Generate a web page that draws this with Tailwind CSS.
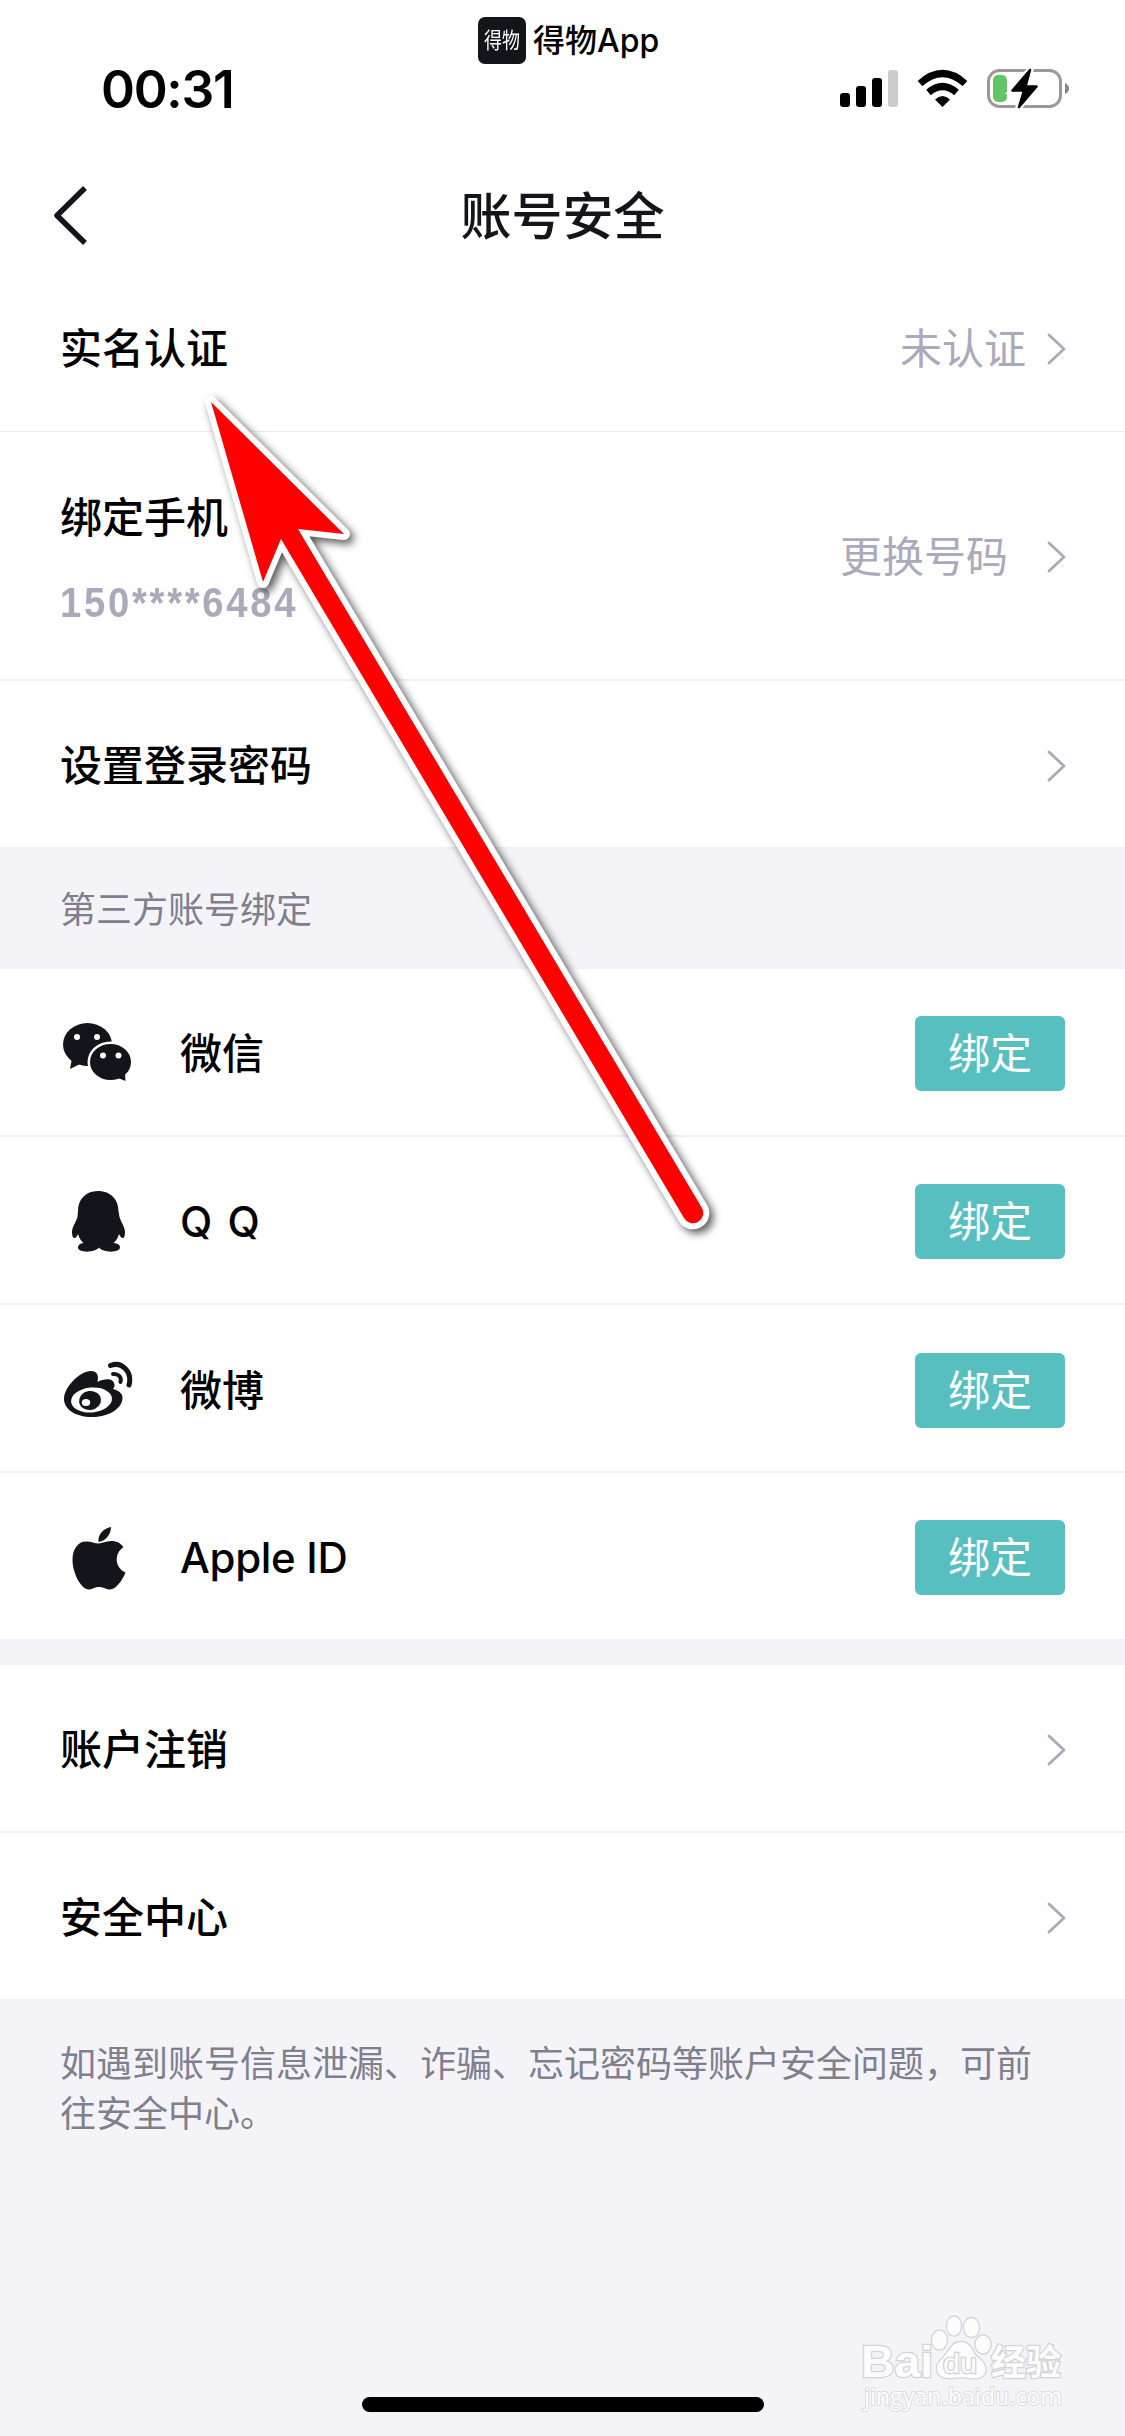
<!DOCTYPE html>
<html lang="zh-CN">
<head>
<meta charset="utf-8">
<title>账号安全</title>
<script src="https://cdn.jsdelivr.net/npm/@tailwindcss/browser@4"></script>
</head>
<body class="relative flex h-[2436px] w-[1125px] flex-col overflow-hidden bg-[#f4f3f8] font-['Inter','Noto_Sans_CJK_SC',sans-serif] text-black">
<svg width="0" height="0" class="absolute">
  <defs>
    <symbol id="chev" viewBox="0 0 20 32"><path d="M2 2 17 16 2 30" fill="none" stroke="#aaaabb" stroke-width="2.8" stroke-linejoin="round" stroke-linecap="round"/></symbol>
  </defs>
</svg>

<header class="h-[264px] bg-white">
  <div class="flex h-[128px] pr-[55px] pl-[101px]">
    <div class="w-[377px] pt-[61px] text-[51.5px] leading-[56px] font-semibold tracking-[-1.3px]">00:31</div>
    <div class="mt-[17px] flex h-[47px] flex-1 items-center gap-[7px]">
      <div class="flex h-[47px] w-[48px] items-center justify-center rounded-[7px] bg-[#14151a] text-[18px] text-white"><span class="scale-y-[1.22]">得物</span></div>
      <div class="text-[32px] font-medium whitespace-nowrap">得物App</div>
    </div>
    <svg class="mt-[66px] h-[46px] w-[230px]" viewBox="0 0 230 46">
      <rect x="0" y="27" width="10" height="14" rx="3"/>
      <rect x="16" y="20" width="10" height="21" rx="3"/>
      <rect x="32" y="12" width="10" height="29" rx="3"/>
      <rect x="48" y="4" width="10" height="37" rx="3" fill="#ccc"/>
      <path d="M102.500 41 95 33.500Q102.500 26.500 110 33.500Z"/>
      <path d="M88.500 26.500Q102.500 14.500 116.500 26.500" fill="none" stroke="#000" stroke-width="7"/>
      <path d="M80 17.500Q102.500-2.500 125 17.500" fill="none" stroke="#000" stroke-width="7"/>
      <rect x="148.500" y="4.500" width="72" height="36" rx="11" fill="none" stroke="#999" stroke-width="3"/>
      <path d="M225 17q4 2 4 5.500t-4 5.500z" fill="#888"/>
      <rect x="153" y="9" width="14" height="27" rx="5" fill="#65c466"/>
      <path d="M191 2.500 171.500 25H182.500L178 42.500 197.500 20H186.500Z" fill="#000" stroke="#fff" stroke-width="6"/>
      <path d="M190 4 172.500 24.500H184L179 41 196.500 20.500H185.500Z" stroke="#000" stroke-width="2.500" stroke-linejoin="round"/>
    </svg>
  </div>
  <div class="grid h-[136px] grid-cols-[200px_1fr_200px] pt-[52px]">
    <svg class="ml-[50px] h-[70px] w-[40px]" viewBox="0 0 40 70"><path d="M35 8 7 35.500 35 63" fill="none" stroke="#14151a" stroke-width="5.500" stroke-linejoin="round"/></svg>
    <h1 class="pt-[1px] text-center text-[51px] leading-[72px] font-medium text-[#14151a]">账号安全</h1>
  </div>
</header>

<main class="text-[42px] font-medium">
  <section class="bg-white">
    <div class="flex h-[168px] items-center justify-between border-b border-[#ececf0] pt-[2px] pr-[58px] pl-[60px]">
      <span>实名认证</span>
      <span class="flex items-center gap-[21px] font-normal text-[#aaaabb]">未认证<svg class="h-8 w-5"><use href="#chev"/></svg></span>
    </div>
    <div class="flex h-[249px] items-center justify-between border-b-2 border-[#f0f0f5] pt-[2px] pr-[58px] pl-[60px]">
      <div class="flex flex-col gap-[30px]">
        <span class="leading-[62px]">绑定手机</span>
        <span class="origin-left scale-x-[0.91] font-['Liberation_Sans'] text-[42px] leading-[48px] font-bold tracking-[3px] text-[#aaaabb]">150****6484</span>
      </div>
      <span class="flex items-center gap-[39px] font-normal text-[#aaaabb]">更换号码<svg class="h-8 w-5"><use href="#chev"/></svg></span>
    </div>
    <div class="flex h-[168px] items-center justify-between border-b-2 border-[#f0f0f5] pt-[3px] pr-[58px] pl-[60px]">
      <span>设置登录密码</span><svg class="h-8 w-5"><use href="#chev"/></svg>
    </div>
  </section>
  <div class="flex h-[120px] items-center pt-[1px] pl-[60px] text-[36px] font-normal text-[#7f7f8e]">第三方账号绑定</div>
  <section class="bg-white">
    <div class="flex h-[168px] items-center border-b-2 border-[#f0f0f5] pt-[3px] pr-[60px] pl-[60px]">
      <svg class="mr-[45px] mb-1 h-[62px] w-[75px]" viewBox="0 0 75 62" fill="#14151a">
        <ellipse cx="27.500" cy="23.500" rx="24.500" ry="21.500"/><path d="M12 37 10 48 20 43Q24 45 30 44.500Z"/>
        <ellipse cx="50.500" cy="41" rx="23" ry="20.500" fill="#fff"/>
        <ellipse cx="50.500" cy="41" rx="20.500" ry="18"/><path d="M58 57 65.500 60 65 52Z"/>
        <g fill="#fff"><circle cx="17" cy="16" r="3"/><circle cx="37" cy="16" r="3"/><circle cx="43" cy="34.500" r="3"/><circle cx="58.500" cy="34.500" r="3"/></g>
      </svg>
      <span class="flex-1">微信</span>
      <button class="h-[75px] w-[150px] rounded-[6px] bg-[#58bfc1] font-normal text-white">绑定</button>
    </div>
    <div class="flex h-[168px] items-center border-b-2 border-[#f0f0f5] pt-[3px] pr-[60px] pl-[60px]">
      <svg class="mr-[45px] h-[64px] w-[75px]" viewBox="0 0 75 64" fill="#14151a">
        <path d="M38 1C25 1 18 10 18 21L17.500 27C16 32 12 37 12 42C12 46 13 48 14.500 48C16 48 17 46 18 44C19 48 21 51 23.500 53C20 53.500 18 55 18 57.500C18 63 35 63 39 57.500C43 63 60 63 60 57.500C60 55 58 53.500 53.500 53C56 51 58 48 59 44C60 46 61 48 63 48C64 48 65 46 65 42C65 37 61 32 59.500 27L58.500 21C58.500 10 51 1 38 1Z"/>
      </svg>
      <span class="flex-1 [word-spacing:4px]">Q Q</span>
      <button class="h-[75px] w-[150px] rounded-[6px] bg-[#58bfc1] font-normal text-white">绑定</button>
    </div>
    <div class="flex h-[168px] items-center border-b-2 border-[#f0f0f5] pt-[4px] pr-[60px] pl-[60px]">
      <svg class="mr-[45px] h-[60px] w-[75px]" viewBox="0 0 75 60" fill="#14151a">
        <path d="M4 39C4 27 20 11 31 11C37 11 39 15 37.500 22C45 18 54 18 54.500 25Q55 27 53 29C60 31 63 34 62.500 39C61 50 47 57 32 57C15 57 4 49 4 39Z"/>
        <ellipse cx="31.500" cy="40" rx="20.500" ry="12.500" fill="#fff" transform="rotate(-5 31.500 40)"/>
        <ellipse cx="30" cy="40.500" rx="11" ry="9.500" transform="rotate(-8 30 40.500)"/>
        <ellipse cx="26" cy="42.500" rx="4.200" ry="3.500" fill="#fff"/>
        <path d="M50.500 5.500C62 1 72.500 12 69 25" fill="none" stroke="#14151a" stroke-width="5" stroke-linecap="round"/>
        <path d="M53 14C58 13.500 62 17 60.500 22" fill="none" stroke="#14151a" stroke-width="4" stroke-linecap="round"/>
      </svg>
      <span class="flex-1">微博</span>
      <button class="h-[75px] w-[150px] rounded-[6px] bg-[#58bfc1] font-normal text-white">绑定</button>
    </div>
    <div class="flex h-[168px] items-center border-b-2 border-[#f0f0f5] pt-[3px] pr-[60px] pl-[60px]">
      <svg class="mr-[45px] h-[66px] w-[75px]" viewBox="0 0 75 66" fill="#14151a">
        <path d="M51 2C43 3.500 37.500 10 38.500 17C46 16 51 9 51 2Z"/>
        <path d="M63.500 22C60 17.500 56 16 51 16C46 16 42 18.500 38.500 18.500C35 18.500 31.500 16.500 26 16.500C18 16.500 12.500 24 12.500 35C12.500 48 21 64.500 29 64.500C32.500 64.500 34 62 39 62C44 62 46 64.500 50 64.500C56 64.500 62.500 55 65.500 47.500C55 43 53.500 29 63.500 22Z"/>
      </svg>
      <span class="flex-1 tracking-[-0.3px]">Apple ID</span>
      <button class="h-[75px] w-[150px] rounded-[6px] bg-[#58bfc1] font-normal text-white">绑定</button>
    </div>
  </section>
  <section class="mt-[24px] bg-white">
    <div class="flex h-[168px] items-center justify-between border-b-2 border-[#f0f0f5] pt-[3px] pr-[58px] pl-[60px]">
      <span>账户注销</span><svg class="h-8 w-5"><use href="#chev"/></svg>
    </div>
    <div class="flex h-[168px] items-center justify-between border-b-2 border-[#f0f0f5] pt-[3px] pr-[58px] pl-[60px]">
      <span>安全中心</span><svg class="h-8 w-5"><use href="#chev"/></svg>
    </div>
  </section>
  <p class="px-[60px] pt-[38px] text-[36px] leading-[50px] font-normal text-[#7f7f8e]">如遇到账号信息泄漏、诈骗、忘记密码等账户安全问题，可前<br>往安全中心。</p>
</main>

<div class="absolute top-[2397px] left-[362px] h-[15px] w-[402px] rounded-full bg-black"></div>

<svg class="absolute top-[2300px] left-[850px] h-[120px] w-[230px]" viewBox="0 0 230 120" fill="#fcfcfd" stroke="#d3d3d7" stroke-width="2.500" paint-order="stroke">
  <g font-family="Liberation Sans" font-weight="bold">
    <text x="11" y="77" font-size="45" textLength="72" lengthAdjust="spacingAndGlyphs">Bai</text>
    <text x="141" y="75" font-size="35" font-family="Noto Sans CJK SC" textLength="70">经验</text>
  </g>
  <g stroke-width="2.500">
    <ellipse cx="89.500" cy="40" rx="7.500" ry="9.500"/><ellipse cx="104" cy="26" rx="7" ry="9.500"/><ellipse cx="121.500" cy="27.500" rx="7.500" ry="9.500"/><ellipse cx="133" cy="44.500" rx="7.500" ry="9"/>
    <path d="M111 42C118 42 121 47 124 53C128 59 136 62 135.500 70C135 78 127 79 120 78C114 77 108 77 102 78C94 79 87 76 87 68C87 62 93 59 97 53C101 47 104 42 111 42Z"/>
  </g>
  <text x="93" y="73" font-size="28" font-family="Liberation Sans" stroke-width="2.500" textLength="34" lengthAdjust="spacingAndGlyphs">du</text>
  <text x="14" y="105" font-size="24" font-family="Open Sans" stroke-width="2" stroke="#dcdce0" textLength="198" lengthAdjust="spacingAndGlyphs">jingyan.baidu.com</text>
</svg>

<svg class="absolute top-0 left-0 h-[1300px] w-[800px] drop-shadow-[4px_4px_4px_rgba(0,0,0,0.65)]" viewBox="0 0 800 1300">
  <path d="M211 402 344 534 298 529 702 1208A10 10 0 0 1 684 1218L281 539 263 582Z" fill="#f00" stroke="#fff" stroke-width="12" stroke-linejoin="round" paint-order="stroke"/>
</svg>
</body>
</html>
